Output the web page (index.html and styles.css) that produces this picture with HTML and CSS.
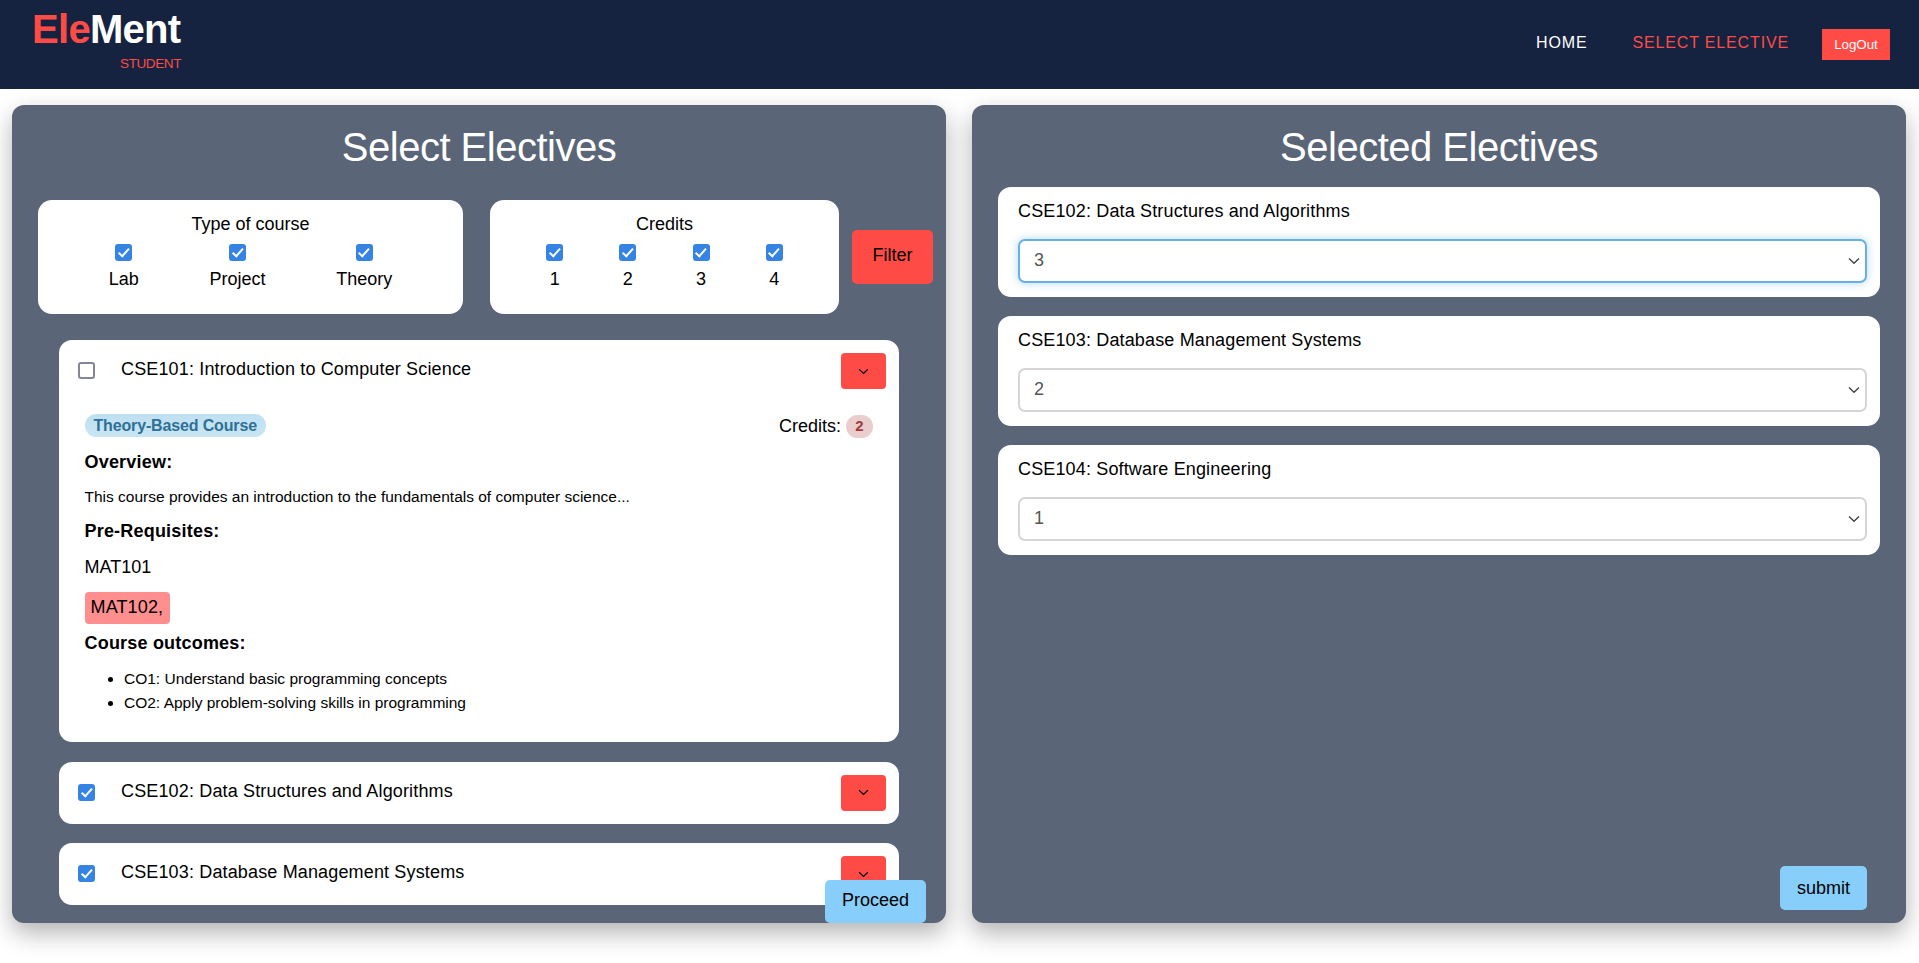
FILE: index.html
```html
<!DOCTYPE html>
<html lang="en">
<head>
<meta charset="utf-8">
<title>EleMent</title>
<link rel="stylesheet" href="styles.css">
</head>
<body>
<svg class="sprite" aria-hidden="true"><symbol id="chev" viewBox="0 0 12 8"><path d="M1 1.5 6 6.3 11 1.5" fill="none" stroke-width="1.4"/></symbol></svg>
<header class="topbar">
  <div class="brand">
    <div class="logo"><span class="red">Ele</span>Ment</div>
    <div class="role">STUDENT</div>
  </div>
  <nav class="nav">
    <a class="nav-link">HOME</a>
    <a class="nav-link active">SELECT ELECTIVE</a>
    <button class="logout">LogOut</button>
  </nav>
</header>
<main class="layout">
  <section class="panel">
    <h1 class="panel-title">Select Electives</h1>
    <div class="filters">
      <div class="filter-box type-box">
        <div class="filter-title">Type of course</div>
        <div class="filter-opts">
          <label class="opt"><input type="checkbox" checked><span>Lab</span></label>
          <label class="opt"><input type="checkbox" checked><span>Project</span></label>
          <label class="opt"><input type="checkbox" checked><span>Theory</span></label>
        </div>
      </div>
      <div class="filter-box credit-box">
        <div class="filter-title">Credits</div>
        <div class="filter-opts">
          <label class="opt"><input type="checkbox" checked><span>1</span></label>
          <label class="opt"><input type="checkbox" checked><span>2</span></label>
          <label class="opt"><input type="checkbox" checked><span>3</span></label>
          <label class="opt"><input type="checkbox" checked><span>4</span></label>
        </div>
      </div>
      <button class="filter-btn">Filter</button>
    </div>
    <div class="course-list">
      <article class="course">
        <div class="course-head">
          <input type="checkbox">
          <span class="course-name">CSE101: Introduction to Computer Science</span>
          <button class="toggle"><svg class="toggle-icon"><use href="#chev"/></svg></button>
        </div>
        <div class="course-body">
          <div class="meta">
            <span class="type-badge">Theory-Based Course</span>
            <span class="credits">Credits: <span class="credit-badge">2</span></span>
          </div>
          <h3 class="sub first">Overview:</h3>
          <p class="small">This course provides an introduction to the fundamentals of computer science...</p>
          <h3 class="sub">Pre-Requisites:</h3>
          <div class="req">MAT101</div>
          <div class="req-row"><span class="req-missing">MAT102,</span></div>
          <h3 class="sub outcome">Course outcomes:</h3>
          <ul class="outcomes">
            <li>CO1: Understand basic programming concepts</li>
            <li>CO2: Apply problem-solving skills in programming</li>
          </ul>
        </div>
      </article>
      <article class="course">
        <div class="course-head">
          <input type="checkbox" checked>
          <span class="course-name">CSE102: Data Structures and Algorithms</span>
          <button class="toggle"><svg class="toggle-icon"><use href="#chev"/></svg></button>
        </div>
      </article>
      <article class="course">
        <div class="course-head">
          <input type="checkbox" checked>
          <span class="course-name">CSE103: Database Management Systems</span>
          <button class="toggle"><svg class="toggle-icon"><use href="#chev"/></svg></button>
        </div>
      </article>
    </div>
    <button class="action proceed">Proceed</button>
  </section>
  <section class="panel">
    <h1 class="panel-title right-title">Selected Electives</h1>
    <div class="picked-list">
      <div class="picked">
        <div class="picked-name">CSE102: Data Structures and Algorithms</div>
        <div class="select-wrap">
          <select class="pick focus"><option>3</option></select>
          <svg class="select-icon"><use href="#chev"/></svg>
        </div>
      </div>
      <div class="picked">
        <div class="picked-name">CSE103: Database Management Systems</div>
        <div class="select-wrap">
          <select class="pick"><option>2</option></select>
          <svg class="select-icon"><use href="#chev"/></svg>
        </div>
      </div>
      <div class="picked">
        <div class="picked-name">CSE104: Software Engineering</div>
        <div class="select-wrap">
          <select class="pick"><option>1</option></select>
          <svg class="select-icon"><use href="#chev"/></svg>
        </div>
      </div>
    </div>
    <div class="submit-row"><button class="action">submit</button></div>
  </section>
</main>
</body>
</html>
```
FILE: styles.css
```css
* { box-sizing: border-box; }
html, body { margin: 0; height: 100%; overflow: hidden; background: #fff; }
body { font-family: "Liberation Sans", Arial, sans-serif; font-size: 18px; color: #000; }
.sprite { width: 0; height: 0; position: absolute; }
button { font-family: inherit; border: 0; cursor: pointer; color: #000; }

.topbar { height: 89px; background: #152340; display: flex; justify-content: space-between; padding: 0 29px 0 32px; }
.brand { width: 149px; padding-top: 6px; }
.logo { font-size: 40px; font-weight: 700; line-height: 46px; color: #fff; letter-spacing: -0.7px; }
.red { color: #ff4b45; }
.role { font-size: 13.5px; letter-spacing: -0.4px; line-height: 16px; color: #ff4b45; text-align: right; margin-top: 4px; }
.nav { display: flex; align-items: flex-start; }
.nav-link { font-size: 16px; letter-spacing: 0.85px; color: #fff; line-height: 18px; margin-top: 34px; margin-right: 45px; }
.nav-link.active { color: #ff4b45; margin-right: 33px; }
.logout { width: 68px; height: 31px; margin-top: 29px; background: #ff4b45; color: #fff; font-size: 13.3px; padding: 0; }

.layout { display: grid; grid-template-columns: 934px 934px; gap: 26px; padding: 16px 12px 0; }
.panel { position: relative; height: 818px; background: #5b6578; border-radius: 12px; box-shadow: 0 10px 25px rgba(0,0,0,.3); padding-top: 19px; display: flex; flex-direction: column; }
.panel-title { margin: 0 0 30px; font-size: 40px; font-weight: 400; line-height: 46px; color: #fff; text-align: center; letter-spacing: -0.5px; }
.right-title { margin-bottom: 17px; }

.filters { display: flex; align-items: center; padding-left: 26px; }
.filter-box { height: 114px; background: #fff; border-radius: 14px; padding-top: 14px; text-align: center; }
.type-box { width: 425px; margin-right: 27px; }
.credit-box { width: 349px; margin-right: 13px; }
.filter-title { line-height: 21px; }
.filter-opts { display: flex; justify-content: space-evenly; margin-top: 9px; }
.opt { display: flex; flex-direction: column; align-items: center; line-height: 21px; }
.opt span { margin-top: 8px; }
.filter-btn { width: 81px; height: 54px; background: #ff4b45; border-radius: 5px; font-size: 18px; padding: 0 0 4px; }

input[type="checkbox"] { appearance: none; width: 17px; height: 17px; margin: 0; border: 2px solid #85859a; border-radius: 3px; background: #fff; position: relative; flex: none; }
input[type="checkbox"]:checked { background: #3584e4; border-color: #3584e4; }
input[type="checkbox"]:checked::after { content: ""; position: absolute; left: 3.6px; top: 0.2px; width: 4px; height: 8.5px; border: solid #fff; border-width: 0 2.2px 2.2px 0; transform: rotate(42deg); }

.course-list { flex: 1; min-height: 0; overflow: hidden; margin: 26px 47px 0; display: flex; flex-direction: column; gap: 19.5px; }
.course { flex: none; background: #fff; border-radius: 13px; }
.course-head { height: 62px; display: flex; align-items: center; padding: 0 13px 0 19px; }
.course-head input { margin-top: -1px; }
.course-name { flex: 1; margin-left: 26px; margin-top: -3px; letter-spacing: 0.15px; }
.toggle { width: 45px; height: 36px; background: #ff4b45; border-radius: 4px; padding: 0; display: flex; align-items: center; justify-content: center; }
.toggle-icon { width: 11px; height: 7px; stroke: #000; }

.course-body { height: 340px; padding: 12px 26px 0 25.5px; }
.meta { display: flex; justify-content: space-between; align-items: center; height: 23px; }
.type-badge { background: linear-gradient(#bfe0f1, #c8e5f5); color: #2f7096; font-size: 16px; font-weight: 700; line-height: 23px; padding: 0 9px; border-radius: 12px; letter-spacing: -0.15px; }
.credits { display: flex; align-items: center; margin-top: 1px; }
.credit-badge { width: 27px; height: 23px; margin-left: 5px; border-radius: 12px; background: #eacece; color: #a43a3e; font-size: 15px; font-weight: 700; line-height: 22px; text-align: center; }
.sub { margin: 0; font-size: 18px; font-weight: 700; line-height: 21px; letter-spacing: 0.2px; }
.first { margin-top: 15px; }
.small { margin: 15px 0 16px; font-size: 15.5px; line-height: 17px; }
.req { margin-top: 15px; line-height: 21px; }
.req-row { margin-top: 13.5px; height: 32px; }
.req-missing { display: inline-block; height: 32px; line-height: 31px; padding: 0 6.5px 0 6px; background: #ff8f8f; border-radius: 4px; letter-spacing: 0.15px; }
.outcome { margin-top: 9px; }
.outcomes { margin: 13.5px 0 0; padding-left: 39.5px; font-size: 15.5px; line-height: 24px; }

.picked-list { display: flex; flex-direction: column; gap: 19.6px; padding: 0 26px; }
.picked { background: #fff; border-radius: 13px; height: 109.6px; padding: 14px 13px 0 20px; }
.picked-name { line-height: 21px; letter-spacing: 0.15px; }
.select-wrap { position: relative; margin-top: 17px; }
.pick { display: block; width: 100%; height: 44px; appearance: none; background: #fff; border: 2px solid #d4d5d7; border-radius: 7px; font-family: inherit; font-size: 18px; color: #555; padding: 0 14px 2px; }
.pick.focus { border-color: #66afe9; box-shadow: 0 0 8px rgba(102,175,233,.5); }
.select-icon { position: absolute; right: 7px; top: 18px; width: 12px; height: 8px; stroke: #444; pointer-events: none; }

.action { width: 87px; height: 44px; background: #87cefa; border-radius: 5px; font-size: 18px; padding: 0; }
.proceed { width: 101px; height: 43px; position: absolute; right: 20px; bottom: 0; padding-bottom: 2px; }
.submit-row { margin-top: auto; display: flex; justify-content: flex-end; padding: 0 39px 13px 0; }
```
